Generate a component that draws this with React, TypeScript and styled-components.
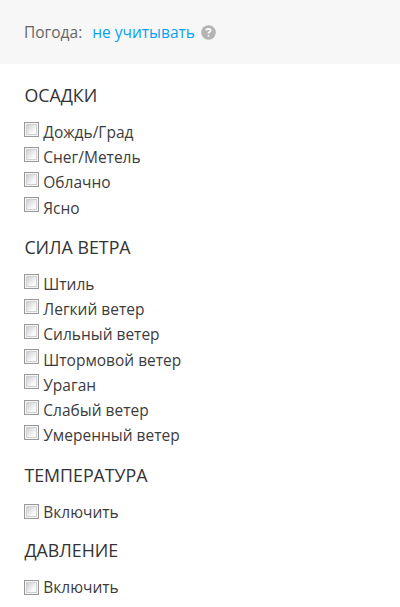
import React from 'react';
import styled, { createGlobalStyle } from 'styled-components';

const GlobalStyle = createGlobalStyle`
  * { box-sizing: border-box; }
  body { margin: 0; background: #fff; font-family: "Open Sans", "Noto Sans", sans-serif; }
`;

const Page = styled.main`
  width: 400px;
  height: 607px;
  overflow: hidden;
  background: #fff;
`;

const Header = styled.header`
  display: flex;
  align-items: center;
  height: 64px;
  padding: 0 24px;
  background: #f7f7f7;
  font-size: 15.5px;
  line-height: 22px;
  color: #666;
`;

const HeaderText = styled.span`
  padding-bottom: 1px;
`;

const ModeLink = styled.a`
  margin-left: 10px;
  padding-bottom: 1px;
  color: #0aa2f0;
`;

const Help = styled.svg`
  margin-left: 6px;
`;

const Group = styled.section<{ $height: number }>`
  height: ${p => p.$height}px;
  padding: 0 24px;
`;

const Title = styled.h2`
  margin: 0;
  padding: 19px 0 0 0.4px;
  height: 56px;
  font-size: 17.8px;
  font-weight: 400;
  line-height: 24px;
  color: #333;
`;

const Option = styled.label`
  display: flex;
  height: 25.2px;
  font-size: 15.5px;
  line-height: 25px;
  color: #3c3c3c;
`;

const Box = styled.input<{ $drop: number }>`
  appearance: none;
  flex: none;
  width: 15px;
  height: 15px;
  margin: ${p => p.$drop}px 4.3px 0 0;
  border: 1px solid #999;
  background: linear-gradient(135deg, #cdd0d5, #fafafa 75%) content-box, #f6f6f6;
  padding: 2px;
  box-shadow: inset 0 0 0 1px #f4f4f4, inset 0 0 0 2px #d2d2d2;
`;

const groups = [
  { title: 'ОСАДКИ', height: 152, drop: 1.6, items: ['Дождь/Град', 'Снег/Метель', 'Облачно', 'Ясно'] },
  { title: 'СИЛА ВЕТРА', height: 228, drop: 1.6, items: ['Штиль', 'Легкий ветер', 'Сильный ветер', 'Штормовой ветер', 'Ураган', 'Слабый ветер', 'Умеренный ветер'] },
  { title: 'ТЕМПЕРАТУРА', height: 75.4, drop: 4, items: ['Включить'] },
  { title: 'ДАВЛЕНИЕ', height: 87, drop: 4.4, items: ['Включить'] },
];

export default function App() {
  return (
    <Page>
      <GlobalStyle />
      <Header>
        <HeaderText>Погода:</HeaderText>
        <ModeLink>не учитывать</ModeLink>
        <Help width="15" height="15" viewBox="0 0 15 15">
          <circle cx="7.5" cy="7.5" r="7.3" fill="#b4b4b4" />
          <path d="M5.2 5.5Q5.3 3.8 7.5 3.8T9.7 5.5Q9.7 6.5 8.5 7.1T7.5 8.6M7.5 9.9v1.7" fill="none" stroke="#fff" strokeWidth="1.7" />
        </Help>
      </Header>
      {groups.map(g => (
        <Group key={g.title} $height={g.height}>
          <Title>{g.title}</Title>
          {g.items.map(i => <Option key={i}><Box type="checkbox" $drop={g.drop} />{i}</Option>)}
        </Group>
      ))}
    </Page>
  );
}
